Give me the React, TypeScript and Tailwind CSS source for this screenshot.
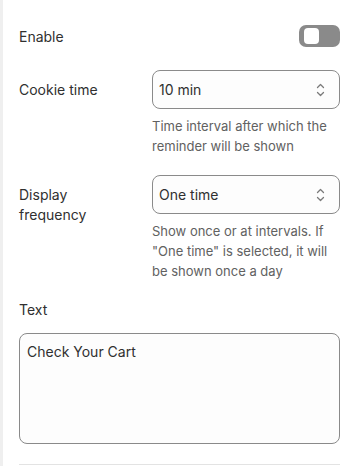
import { useState } from "react";

export default function App() {
  const [enabled, setEnabled] = useState(false);
  const [cookie, setCookie] = useState("10 min");
  const [freq, setFreq] = useState("One time");
  const [text, setText] = useState("Check Your Cart");

  return (
    <div
      className="min-h-[466px] bg-white border-l-[3px] border-[#efefef] text-[#303030]"
      style={{ fontFamily: "Inter, 'Noto Sans', sans-serif" }}
    >
      <div className="pl-4 pr-[18px] pt-[25px]">
        <div className="flex items-center justify-between h-[22px]">
          <span className="text-[14px] leading-5 pt-[2px]">Enable</span>
          <button
            onClick={() => setEnabled(!enabled)}
            className={`w-[41px] h-[22px] rounded-[7px] flex items-center px-[5px] ${
              enabled ? "bg-[#303030] justify-end" : "bg-[#8a8a8a] justify-start"
            }`}
          >
            <span className="w-[15px] h-[16px] rounded-[4px] bg-white" />
          </button>
        </div>

        <Field
          label="Cookie time"
          value={cookie}
          onChange={setCookie}
          options={["5 min", "10 min", "15 min", "30 min"]}
          help={["Time interval after which the", "reminder will be shown"]}
          className="mt-[23px]"
        />

        <Field
          label={["Display", "frequency"]}
          value={freq}
          onChange={setFreq}
          options={["One time", "Intervals"]}
          help={["Show once or at intervals. If", "\"One time\" is selected, it will", "be shown once a day"]}
          className="mt-[19px]"
        />

        <div className="mt-[19px] text-[14px] leading-5">Text</div>
        <textarea
          value={text}
          onChange={(e) => setText(e.target.value)}
          className="mt-[13px] block w-full h-[111px] resize-none rounded-[8px] border border-[#8a8a8a] bg-[#fdfdfd] px-[7px] py-[8px] text-[14px] leading-5 text-[#303030] outline-none"
        />

        <div className="mt-[20px] h-px bg-[#e3e3e3]" />
      </div>
    </div>
  );
}

function Field({
  label,
  value,
  onChange,
  options,
  help,
  className,
}: {
  label: string | string[];
  value: string;
  onChange: (v: string) => void;
  options: string[];
  help: string[];
  className?: string;
}) {
  const lines = Array.isArray(label) ? label : [label];
  return (
    <div className={`flex ${className ?? ""}`}>
      <div className="w-[133px] shrink-0 pt-[10px] text-[14px] leading-5">
        {lines.map((l) => (
          <div key={l}>{l}</div>
        ))}
      </div>
      <div className="flex-1">
        <div className="relative h-[39px] rounded-[8px] border border-[#8a8a8a] bg-[#fdfdfd]">
          <select
            value={value}
            onChange={(e) => onChange(e.target.value)}
            className="absolute inset-0 w-full opacity-0"
          >
            {options.map((o) => (
              <option key={o}>{o}</option>
            ))}
          </select>
          <div className="flex h-full items-center justify-between pl-[6px] pr-[13px] pointer-events-none">
            <span className="text-[14px] leading-5 text-[#303030]">{value}</span>
            <svg width="11" height="16" viewBox="0 0 11 16" fill="none">
              <path d="M2.5 5.5 5.5 2.5 8.5 5.5" stroke="#7a7a7a" strokeWidth="1.3" strokeLinecap="round" strokeLinejoin="round" />
              <path d="M2.5 10.5 5.5 13.5 8.5 10.5" stroke="#7a7a7a" strokeWidth="1.3" strokeLinecap="round" strokeLinejoin="round" />
            </svg>
          </div>
        </div>
        <div className="mt-[7px] text-[13px] leading-5 text-[#616161]">
          {help.map((h) => (
            <div key={h}>{h}</div>
          ))}
        </div>
      </div>
    </div>
  );
}
